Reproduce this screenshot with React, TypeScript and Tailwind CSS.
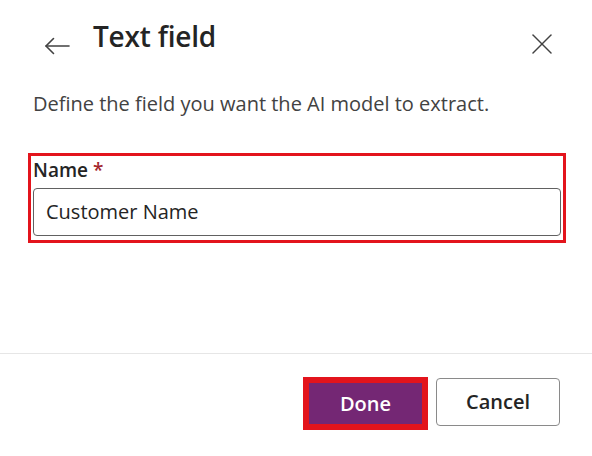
import React from 'react';

const font = { fontFamily: '"Open Sans", "Noto Sans", Arial, sans-serif' };

function BackArrow() {
    return (
        <svg width="26" height="18" viewBox="0 0 26 18" fill="none" stroke="#424242" strokeWidth="1.6" strokeLinecap="round" strokeLinejoin="round">
            <path d="M25 9H2" />
            <path d="M9.5 1.5L2 9l7.5 7.5" />
        </svg>
    );
}

function CloseIcon() {
    return (
        <svg width="20" height="20" viewBox="0 0 20 20" fill="none" stroke="#424242" strokeWidth="1.5" strokeLinecap="round">
            <path d="M1 1l18 18" />
            <path d="M19 1L1 19" />
        </svg>
    );
}

export default function App() {
    return (
        <div className="w-[592px] h-[456px] bg-white flex flex-col text-[#242424]" style={font}>
            {/* Header */}
            <div className="flex items-start h-[50px] mt-[16px]">
                <div className="ml-[44px] mt-[21px] flex">
                    <BackArrow />
                </div>
                <h1 className="ml-[23px] mt-[2px] text-[28px] font-semibold leading-[36px] tracking-[-0.2px] text-[#242424]">Text field</h1>
                <div className="ml-auto mr-[40px] mt-[18px] flex">
                    <CloseIcon />
                </div>
            </div>

            {/* Description */}
            <p className="mt-[25px] ml-[33px] text-[20px] leading-[26px] text-[#424242]">
                Define the field you want the AI model to extract.
            </p>

            {/* Field */}
            <div className="mt-[36px] ml-[28px] w-[538px] h-[90px] border-[3px] border-[#e3141c] px-[2px] pb-[4px] flex flex-col">
                <label className="h-[28px] text-[19px] font-semibold leading-[28px] text-[#242424]">
                    Name <span className="text-[#a4262c]">*</span>
                </label>
                <div className="mt-[4px] h-[48px] border border-[#616161] rounded-[4px] flex items-center pl-[12px]">
                    <span className="text-[20px] text-[#242424]">Customer Name</span>
                </div>
            </div>

            {/* Footer */}
            <div className="mt-[110px] border-t border-[#e6e6e6]" />
            <div className="flex justify-end items-start pr-[32px] mt-[23px] gap-[8px]">
                <div className="w-[125px] h-[53px] border-[6px] border-[#e3141c] bg-[#742774] flex items-center justify-center">
                    <span className="text-[20px] font-semibold text-white">Done</span>
                </div>
                <div className="mt-px w-[124px] h-[48px] border border-[#8a8a8a] rounded-[4px] bg-white flex items-center justify-center">
                    <span className="text-[20px] font-semibold text-[#242424]">Cancel</span>
                </div>
            </div>
        </div>
    );
}
